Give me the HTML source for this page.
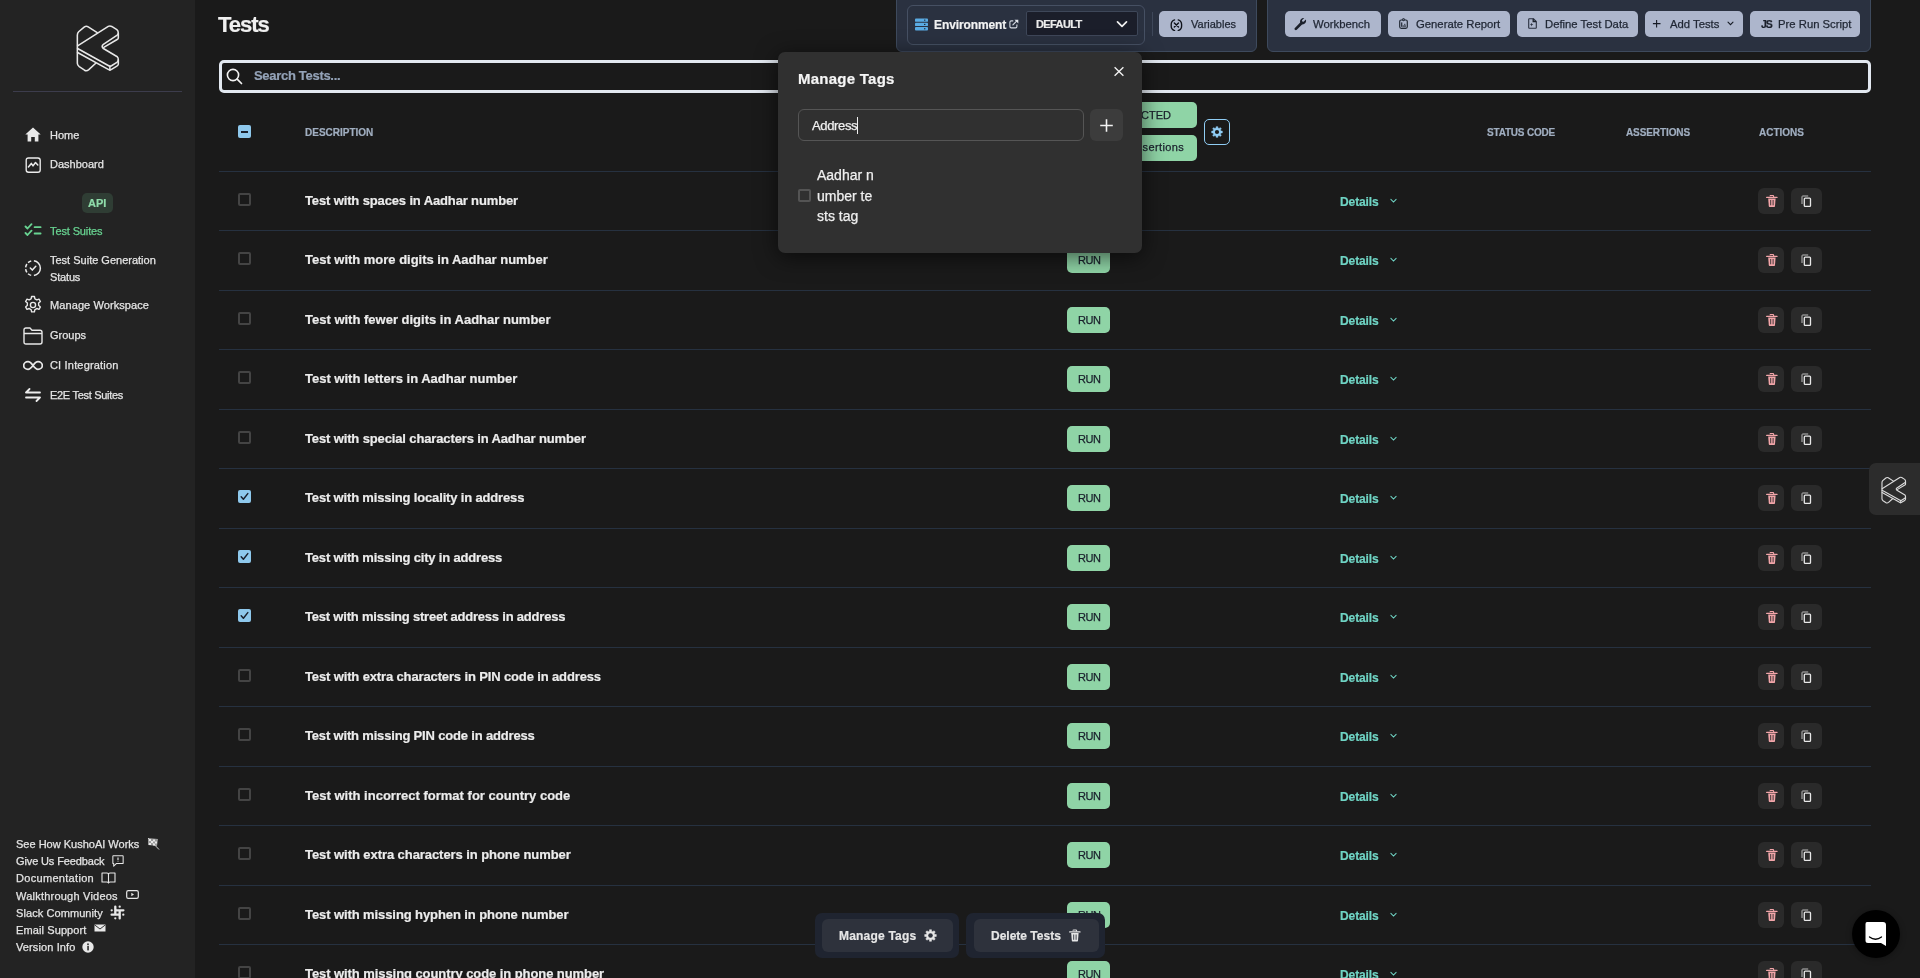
<!DOCTYPE html>
<html><head><meta charset="utf-8"><title>Tests</title>
<style>
html,body{margin:0;padding:0;width:1920px;height:978px;overflow:hidden;background:#1a1a1a;font-family:"Liberation Sans",sans-serif;}
.a{position:absolute;box-sizing:border-box;}
.t{position:absolute;white-space:nowrap;-webkit-font-smoothing:antialiased;will-change:transform;}
.w4{-webkit-text-stroke:0.25px currentColor;}
.w7{-webkit-text-stroke:0.2px currentColor;}
</style></head><body>
<div class="a" style="left:0px;top:0px;width:195px;height:978px;background:#232323;"></div>
<svg class="a" style="left:60px;top:15px;" width="80" height="80" viewBox="0 0 978 978" fill="none"><g stroke="#e8e8e8" stroke-width="19" stroke-linejoin="round" stroke-linecap="round"><path d="M455,215 L345,145 Q320,130 295,148 L228,205 Q212,222 212,248 L212,590 Q212,615 235,632 L300,675 Q325,690 352,668 L437,590"/>
<path d="M215,378 L590,140 Q610,128 632,140 L695,178 Q713,192 713,222 Q712,238 695,250 L530,360 Q500,384 530,410 L700,510 Q713,522 713,548 Q712,568 695,580 L630,620 Q612,630 595,620 L215,410"/>
<path d="M713,222 L713,281 Q713,292 698,300 L535,396"/>
<path d="M713,548 L713,602 Q712,615 695,625 L630,665 Q612,676 595,668 L215,458"/>
<path d="M610,627 L610,675"/></g></svg>
<div class="a" style="left:13px;top:91px;width:169px;height:1px;background:#3c3c4c;"></div>
<svg class="a" style="left:25px;top:127px;" width="16" height="15" viewBox="0 0 16 15" fill="none"><path d="M8 0.5 L0.3 7.6 H2.6 V14.5 H6.2 V10 H9.8 V14.5 H13.4 V7.6 H15.7 Z" fill="#e8e8e8"/></svg>
<div class="t w4" style="left:49.5px;top:128.69px;font-size:11px;line-height:13px;color:#e4e4e4;font-weight:400;">Home</div>
<svg class="a" style="left:25px;top:157px;" width="16" height="16" viewBox="0 0 16 16" fill="none"><rect x="1.2" y="0.95" width="14" height="14.3" rx="2.3" stroke="#ececec" stroke-width="1.35"/><path d="M3.4 9.9 L6.3 6.4 L8 8.9 L10.5 5.5 L12.8 8" stroke="#ececec" stroke-width="1.5" stroke-linejoin="round" stroke-linecap="round"/></svg>
<div class="t w4" style="left:49.5px;top:158.44px;font-size:11px;line-height:13px;color:#e4e4e4;font-weight:400;">Dashboard</div>
<div class="a" style="left:82px;top:193px;width:31px;height:20px;background:#2f3d34;border-radius:5px;"></div>
<div class="t w7" style="left:88px;top:196.69px;font-size:11px;line-height:13px;color:#8fdcaa;font-weight:700;">API</div>
<svg class="a" style="left:24px;top:223px;" width="19" height="15" viewBox="0 0 19 15" fill="none"><path d="M1.5 3.5 L3.5 5.5 L7.5 1.2 M1.5 10 L3.5 12 L7.5 7.7" stroke="#68d391" stroke-width="1.8" stroke-linecap="round" stroke-linejoin="round"/><path d="M10.6 4.2 H16.6 M10.6 10.5 H16.6" stroke="#68d391" stroke-width="1.8" stroke-linecap="round"/></svg>
<div class="t w4" style="left:49.5px;top:224.69px;font-size:11px;line-height:13px;color:#68d391;font-weight:400;letter-spacing:-0.12px;">Test Suites</div>
<svg class="a" style="left:24px;top:259px;" width="18" height="18" viewBox="0 0 18 18" fill="none"><path d="M9.90 1.86 A7.4 7.4 0 0 1 9.90 16.54 M7.21 16.38 A7.4 7.4 0 0 1 4.10 14.74 M2.90 13.39 A7.4 7.4 0 0 1 1.66 10.10 M1.66 8.30 A7.4 7.4 0 0 1 2.90 5.01 M4.10 3.66 A7.4 7.4 0 0 1 7.21 2.02" stroke="#ececec" stroke-width="1.5" stroke-linecap="butt"/><path d="M6.3 9 L8.3 11.1 L11.8 7.2" stroke="#ececec" stroke-width="1.5" stroke-linecap="round" stroke-linejoin="round"/></svg>
<div class="t w4" style="left:49.5px;top:253.59px;font-size:11px;line-height:13px;color:#e4e4e4;font-weight:400;">Test Suite Generation</div>
<div class="t w4" style="left:49.5px;top:270.59px;font-size:11px;line-height:13px;color:#e4e4e4;font-weight:400;letter-spacing:-0.17px;">Status</div>
<svg class="a" style="left:23px;top:295px;" width="20" height="20" viewBox="0 0 20 20" fill="none"><path d="M8.6 1.5 h2.8 l0.5 2.3 a6.5 6.5 0 0 1 1.9 1.1 l2.2 -0.8 l1.4 2.4 l-1.8 1.6 a6.5 6.5 0 0 1 0 2.2 l1.8 1.6 l-1.4 2.4 l-2.2 -0.8 a6.5 6.5 0 0 1 -1.9 1.1 l-0.5 2.3 h-2.8 l-0.5 -2.3 a6.5 6.5 0 0 1 -1.9 -1.1 l-2.2 0.8 l-1.4 -2.4 l1.8 -1.6 a6.5 6.5 0 0 1 0 -2.2 l-1.8 -1.6 l1.4 -2.4 l2.2 0.8 a6.5 6.5 0 0 1 1.9 -1.1 Z" stroke="#e8e8e8" stroke-width="1.4" stroke-linejoin="round"/><circle cx="10" cy="10" r="2.6" stroke="#e8e8e8" stroke-width="1.4"/></svg>
<div class="t w4" style="left:49.5px;top:298.69px;font-size:11px;line-height:13px;color:#e4e4e4;font-weight:400;letter-spacing:0.09px;">Manage Workspace</div>
<svg class="a" style="left:23px;top:327px;" width="20" height="18" viewBox="0 0 20 18" fill="none"><path d="M1 3 Q1 1 3 1 H7 L9 3.2 H17 Q19 3.2 19 5.2 V15 Q19 17 17 17 H3 Q1 17 1 15 Z M1 6.5 H19" stroke="#e8e8e8" stroke-width="1.4" stroke-linejoin="round"/></svg>
<div class="t w4" style="left:49.5px;top:329.09px;font-size:11px;line-height:13px;color:#e4e4e4;font-weight:400;">Groups</div>
<svg class="a" style="left:23px;top:359px;" width="20" height="13" viewBox="0 0 20 13" fill="none"><path d="M10 6.5 C11.8 4 13.3 2.7 15 2.7 A4.3 3.8 0 0 1 15 10.3 C13.3 10.3 11.8 9 10 6.5 C8.2 4 6.7 2.7 5 2.7 A4.3 3.8 0 0 0 5 10.3 C6.7 10.3 8.2 9 10 6.5 Z" stroke="#e8e8e8" stroke-width="1.7" stroke-linejoin="round"/></svg>
<div class="t w4" style="left:49.5px;top:358.89px;font-size:11px;line-height:13px;color:#e4e4e4;font-weight:400;letter-spacing:0.18px;">CI Integration</div>
<svg class="a" style="left:24px;top:388px;" width="18" height="14" viewBox="0 0 18 14" fill="none"><path d="M2 4.5 H16 M2 4.5 L5.5 1 M16 9.5 H2 M16 9.5 L12.5 13" stroke="#ececec" stroke-width="1.8" stroke-linecap="round" stroke-linejoin="round"/></svg>
<div class="t w4" style="left:49.5px;top:388.89px;font-size:11px;line-height:13px;color:#e4e4e4;font-weight:400;letter-spacing:-0.3px;">E2E Test Suites</div>
<div class="t w4" style="left:16px;top:837.99px;font-size:11px;line-height:13px;color:#e4e4e4;font-weight:400;letter-spacing:0px;">See How KushoAI Works</div>
<div class="t w4" style="left:16px;top:854.59px;font-size:11px;line-height:13px;color:#e4e4e4;font-weight:400;letter-spacing:-0.125px;">Give Us Feedback</div>
<div class="t w4" style="left:16px;top:871.89px;font-size:11px;line-height:13px;color:#e4e4e4;font-weight:400;letter-spacing:0.31px;">Documentation</div>
<div class="t w4" style="left:16px;top:889.69px;font-size:11px;line-height:13px;color:#e4e4e4;font-weight:400;letter-spacing:0.22px;">Walkthrough Videos</div>
<div class="t w4" style="left:16px;top:906.59px;font-size:11px;line-height:13px;color:#e4e4e4;font-weight:400;letter-spacing:0.08px;">Slack Community</div>
<div class="t w4" style="left:16px;top:923.59px;font-size:11px;line-height:13px;color:#e4e4e4;font-weight:400;letter-spacing:0.11px;">Email Support</div>
<div class="t w4" style="left:16px;top:940.59px;font-size:11px;line-height:13px;color:#e4e4e4;font-weight:400;letter-spacing:0.11px;">Version Info</div>
<svg class="a" style="left:147px;top:837px;" width="13" height="14" viewBox="0 0 13 14" fill="none"><path d="M1 1 L11 2 L10 9 L1 8 Z" fill="#9a9a9a"/><path d="M1 1 L12 12.5" stroke="#cfcfcf" stroke-width="1"/><path d="M2 2 h2 v2 h-2z M6 2.5 h2 v2 h-2z M4 4 h2 v2 h-2z M8 4.5 h2 v2 h-2z M2 6 h2 v2 h-2z M6 6.5 h2 v2 h-2z" fill="#e8e8e8"/></svg>
<svg class="a" style="left:112px;top:854.5px;" width="12" height="12.0" viewBox="0 0 14 14" fill="none"><path d="M1.5 1 H12.5 Q13 1 13 1.5 V9.5 Q13 10 12.5 10 H5 L2 13 V10 H1.5 Q1 10 1 9.5 V1.5 Q1 1 1.5 1 Z" stroke="#e8e8e8" stroke-width="1.2" stroke-linejoin="round"/><path d="M7 3 V6.2 M7 7.5 V8.3" stroke="#e8e8e8" stroke-width="1.3"/></svg>
<svg class="a" style="left:101px;top:872px;" width="15" height="12" viewBox="0 0 15 12" fill="none"><path d="M1 1 H6 Q7.5 1 7.5 2.5 V11 Q7.5 10 6 10 H1 Z M14 1 H9 Q7.5 1 7.5 2.5 V11 Q7.5 10 9 10 H14 Z" stroke="#e8e8e8" stroke-width="1.1" stroke-linejoin="round"/></svg>
<svg class="a" style="left:126px;top:890px;" width="13" height="9" viewBox="0 0 13 9" fill="none"><rect x="0.7" y="0.7" width="11.6" height="7.6" rx="1.6" stroke="#e8e8e8" stroke-width="1.2"/><path d="M5.3 2.8 L8 4.5 L5.3 6.2 Z" fill="#e8e8e8"/></svg>
<svg class="a" style="left:110px;top:905px;" width="15" height="15" viewBox="0 0 15 15" fill="none"><g stroke="#e8e8e8" stroke-width="2.3" stroke-linecap="round"><path d="M5.3 1.6 V8.2 M6.8 5.3 H13.4 M9.7 6.8 V13.4 M8.2 9.7 H1.6"/></g><g fill="#e8e8e8"><circle cx="1.7" cy="5.3" r="1.15"/><circle cx="9.7" cy="1.7" r="1.15"/><circle cx="13.3" cy="9.7" r="1.15"/><circle cx="5.3" cy="13.3" r="1.15"/></g></svg>
<svg class="a" style="left:94px;top:924px;" width="12" height="8" viewBox="0 0 12 8" fill="none"><rect x="0.5" y="0.5" width="11" height="7" fill="#e8e8e8"/><path d="M0.5 0.8 L6 5 L11.5 0.8" stroke="#222" stroke-width="0.9" fill="none"/></svg>
<svg class="a" style="left:82px;top:940.5px;" width="12" height="12.0" viewBox="0 0 12 12" fill="none"><circle cx="6" cy="6" r="5.7" fill="#e8e8e8"/><rect x="5.3" y="4.8" width="1.5" height="4.6" fill="#222"/><circle cx="6" cy="3.2" r="0.85" fill="#222"/></svg>
<div class="t w7" style="left:218.3px;top:12.27px;font-size:22px;line-height:26px;color:#f0f0f0;font-weight:700;letter-spacing:-1.05px;">Tests</div>
<div class="a" style="left:896px;top:-10px;width:361px;height:61.5px;background:#2a3140;border:1px solid #3e4a5d;border-radius:6px;"></div>
<div class="a" style="left:907px;top:4.5px;width:238px;height:40.5px;border:1px solid #465063;border-radius:6px;"></div>
<svg class="a" style="left:915px;top:18px;" width="13" height="13" viewBox="0 0 13 13" fill="none"><g fill="#5aabe3"><rect x="0" y="0.5" width="13" height="3.3" rx="0.9"/><rect x="0" y="4.8" width="13" height="3.3" rx="0.9"/><rect x="0" y="9.1" width="13" height="3.3" rx="0.9"/></g><g fill="#1f2a3a"><rect x="9" y="1.6" width="1.4" height="1.1"/><rect x="9" y="5.9" width="1.4" height="1.1"/><rect x="9" y="10.2" width="1.4" height="1.1"/></g></svg>
<div class="t w7" style="left:933.5px;top:17.84px;font-size:12px;line-height:14px;color:#f2f2f2;font-weight:700;letter-spacing:-0.1px;">Environment</div>
<svg class="a" style="left:1009px;top:19px;" width="10" height="10" viewBox="0 0 10 10" fill="none"><path d="M4.3 1.9 H2.2 Q0.9 1.9 0.9 3.2 V7.6 Q0.9 8.9 2.2 8.9 H6.6 Q7.9 8.9 7.9 7.6 V5.6" stroke="#d4d9e2" stroke-width="1.1"/><path d="M3.9 5.9 L7.6 2.2" stroke="#d4d9e2" stroke-width="1.2" stroke-linecap="round"/><path d="M5.5 0.7 H9.3 V4.5 Z" fill="#e4e8ee"/></svg>
<div class="a" style="left:1025.5px;top:11.3px;width:112.5px;height:25.2px;background:#1b1e2a;border:1px solid #3e4759;border-radius:2px;"></div>
<div class="t w7" style="left:1036px;top:17.69px;font-size:11px;line-height:13px;color:#ececec;font-weight:700;letter-spacing:-0.6px;">DEFAULT</div>
<svg class="a" style="left:1116px;top:20px;" width="12" height="8" viewBox="0 0 12 8" fill="none"><path d="M1.5 1.8 L6 6.3 L10.5 1.8" stroke="#f0f0f0" stroke-width="1.7" stroke-linecap="round" stroke-linejoin="round"/></svg>
<div class="a" style="left:1152px;top:12.4px;width:1px;height:23.300000000000004px;background:#3e4759;"></div>
<div class="a" style="left:1159px;top:11px;width:88px;height:26px;background:#adb6cc;border-radius:5px;"></div>
<svg class="a" style="left:1170px;top:18.5px;" width="13" height="12.5" viewBox="0 0 13 12.5" fill="none"><path d="M4.6 0.9 Q1.2 2 1.2 5.5 V7 Q1.2 10.5 4.6 11.6 M8.2 0.9 Q11.6 2 11.6 5.5 V7 Q11.6 10.5 8.2 11.6" stroke="#0f131b" stroke-width="1.35" stroke-linecap="round"/><path d="M4.3 3.9 L8.5 8.1 M8.5 3.9 L4.3 8.1" stroke="#0f131b" stroke-width="1.35" stroke-linecap="round"/></svg>
<div class="t w4" style="left:1191px;top:18.09px;font-size:11px;line-height:13px;color:#1f2633;font-weight:400;">Variables</div>
<div class="a" style="left:1267.4px;top:-10px;width:603.5999999999999px;height:61.5px;background:#2a3140;border:1px solid #3e4a5d;border-radius:6px;"></div>
<div class="a" style="left:1285px;top:11px;width:96px;height:25.799999999999997px;background:#adb6cc;border-radius:5px;"></div>
<div class="t w4" style="left:1312.7px;top:16.78px;font-size:11.3px;line-height:14px;color:#1f2633;font-weight:400;">Workbench</div>
<div class="a" style="left:1387.8px;top:11px;width:122.0px;height:25.799999999999997px;background:#adb6cc;border-radius:5px;"></div>
<div class="t w4" style="left:1415.6px;top:16.78px;font-size:11.3px;line-height:14px;color:#1f2633;font-weight:400;">Generate Report</div>
<div class="a" style="left:1517.2px;top:11px;width:120.70000000000005px;height:25.799999999999997px;background:#adb6cc;border-radius:5px;"></div>
<div class="t w4" style="left:1544.5px;top:16.78px;font-size:11.3px;line-height:14px;color:#1f2633;font-weight:400;">Define Test Data</div>
<div class="a" style="left:1645.2px;top:11px;width:97.59999999999991px;height:25.799999999999997px;background:#adb6cc;border-radius:5px;"></div>
<div class="t w4" style="left:1669.9px;top:16.78px;font-size:11.3px;line-height:14px;color:#1f2633;font-weight:400;">Add Tests</div>
<div class="a" style="left:1750px;top:11px;width:110px;height:25.799999999999997px;background:#adb6cc;border-radius:5px;"></div>
<div class="t w4" style="left:1777.9px;top:16.78px;font-size:11.3px;line-height:14px;color:#1f2633;font-weight:400;">Pre Run Script</div>
<svg class="a" style="left:1293.8px;top:17px;" width="13.0" height="14" viewBox="0 0 13 14" fill="none"><path d="M11.8 2.6 L9.6 4.8 L8.2 4.6 L8 3.2 L10.2 1 A3.6 3.6 0 0 0 6.2 5.6 L0.9 10.9 A1.3 1.3 0 0 0 2.8 12.8 L8.1 7.5 A3.6 3.6 0 0 0 11.8 2.6 Z" fill="#1b202b"/></svg>
<svg class="a" style="left:1398.5px;top:18.2px;" width="9.0" height="11.0" viewBox="0 0 9 11" fill="none"><rect x="0.7" y="2" width="7.6" height="8.3" rx="1.5" stroke="#232a36" stroke-width="1.2"/><circle cx="4.5" cy="1.6" r="1.1" stroke="#232a36" stroke-width="1"/><rect x="2.1" y="4.4" width="1.2" height="4.4" fill="#232a36"/><rect x="3.3" y="7.2" width="3.7" height="2.2" fill="#5a6272"/><rect x="5.3" y="5.8" width="1" height="1.4" fill="#232a36"/></svg>
<svg class="a" style="left:1527.5px;top:18.3px;" width="9.0" height="11.0" viewBox="0 0 9 11" fill="none"><path d="M1.3 0.7 H5.4 L8.3 3.6 V9.7 Q8.3 10.3 7.7 10.3 H1.3 Q0.7 10.3 0.7 9.7 V1.3 Q0.7 0.7 1.3 0.7 Z" stroke="#2a3140" stroke-width="1.1" stroke-linejoin="round"/><path d="M5.2 0.8 V3.5 H8.2" stroke="#1b202b" stroke-width="1.3"/><path d="M3.6 4.8 L4.1 6.1 L5.4 6.6 L4.1 7.1 L3.6 8.4 L3.1 7.1 L1.8 6.6 L3.1 6.1 Z" fill="#2a3140"/></svg>
<svg class="a" style="left:1652px;top:19px;" width="9" height="9" viewBox="0 0 9 9" fill="none"><path d="M4.6 0.9 V8.5 M0.9 4.6 H8.5" stroke="#161b25" stroke-width="1.1"/></svg>
<svg class="a" style="left:1727px;top:21px;" width="7" height="5" viewBox="0 0 7 5" fill="none"><path d="M1 1.1 L3.5 3.7 L6 1.1" stroke="#161b25" stroke-width="1.1" stroke-linecap="round"/></svg>
<div class="t w7" style="left:1760.8px;top:17.56px;font-size:10.5px;line-height:13px;color:#1b202b;font-weight:700;letter-spacing:-1.0px;">JS</div>
<div class="a" style="left:219px;top:60px;width:1652px;height:33px;border:3px solid #e2e8f0;border-radius:5px;background:#1a1a1a;"></div>
<svg class="a" style="left:226px;top:68px;" width="17" height="17" viewBox="0 0 17 17" fill="none"><circle cx="7" cy="7" r="5.6" stroke="#f2f2f2" stroke-width="1.6"/><path d="M11.2 11.2 L15.5 15.5" stroke="#f2f2f2" stroke-width="1.7" stroke-linecap="round"/></svg>
<div class="t w7" style="left:254.3px;top:68.29px;font-size:13px;line-height:16px;color:#94a3b8;font-weight:700;letter-spacing:-0.3px;">Search Tests...</div>
<div class="a" style="left:238px;top:125px;width:13px;height:13px;background:#8ec8ec;border-radius:2px;"></div>
<div class="a" style="left:241px;top:130.5px;width:7px;height:2.0px;background:#1a202c;"></div>
<div class="t w7" style="left:305px;top:126.93px;font-size:10px;line-height:12px;color:#a0aec0;font-weight:700;">DESCRIPTION</div>
<div class="t w7" style="left:1487px;top:126.93px;font-size:10px;line-height:12px;color:#a0aec0;font-weight:700;letter-spacing:-0.2px;">STATUS CODE</div>
<div class="t w7" style="left:1626.4px;top:126.93px;font-size:10px;line-height:12px;color:#a0aec0;font-weight:700;letter-spacing:-0.1px;">ASSERTIONS</div>
<div class="t w7" style="left:1758.5px;top:126.93px;font-size:10px;line-height:12px;color:#a0aec0;font-weight:700;">ACTIONS</div>
<div class="a" style="left:1040px;top:102px;width:157px;height:26px;background:#8fd4a6;border-radius:5px;"></div>
<div class="a" style="left:1040px;top:135px;width:157px;height:26px;background:#8fd4a6;border-radius:5px;"></div>
<div class="t w4" style="left:1086px;top:108.69px;font-size:11px;line-height:13px;color:#1a202c;font-weight:400;">RUN SELECTED</div>
<div class="t w4" style="left:1079.8px;top:141.19px;font-size:11px;line-height:13px;color:#1a202c;font-weight:400;letter-spacing:0.4px;">Run with Assertions</div>
<div class="a" style="left:1204px;top:119px;width:26px;height:26px;border:1.5px solid #90cdf4;border-radius:5px;"></div>
<svg class="a" style="left:1211px;top:126px;" width="12" height="12" viewBox="0 0 12 12" fill="none"><path d="M5.01 1.71 L5.02 0.18 L6.98 0.18 L6.99 1.71 L8.34 2.27 L9.42 1.19 L10.81 2.58 L9.73 3.66 L10.29 5.01 L11.82 5.02 L11.82 6.98 L10.29 6.99 L9.73 8.34 L10.81 9.42 L9.42 10.81 L8.34 9.73 L6.99 10.29 L6.98 11.82 L5.02 11.82 L5.01 10.29 L3.66 9.73 L2.58 10.81 L1.19 9.42 L2.27 8.34 L1.71 6.99 L0.18 6.98 L0.18 5.02 L1.71 5.01 L2.27 3.66 L1.19 2.58 L2.58 1.19 L3.66 2.27 Z" fill="#90cdf4" stroke="#90cdf4" stroke-width="0.5" stroke-linejoin="round" transform="translate(6 6) scale(0.92) translate(-6 -6)"/><circle cx="6" cy="6" r="2.1" fill="#1a1a1a"/></svg>
<div class="a" style="left:219px;top:171px;width:1652px;height:1px;background:#263140;"></div>
<div class="a" style="left:238px;top:193px;width:13px;height:13px;border:2px solid #444444;border-radius:2px;"></div>
<div class="t w7" style="left:305px;top:193.24px;font-size:13px;line-height:16px;color:#ececec;font-weight:700;letter-spacing:-0.135px;">Test with spaces in Aadhar number</div>
<div class="a" style="left:1067px;top:188px;width:43px;height:26px;background:#8fd4a6;border-radius:5px;"></div>
<div class="t w4" style="left:1077.8px;top:194.64px;font-size:11px;line-height:13px;color:#1a202c;font-weight:400;letter-spacing:-0.4px;">RUN</div>
<div class="t w7" style="left:1340.4px;top:194.84px;font-size:12px;line-height:14px;color:#6fd4c4;font-weight:700;letter-spacing:-0.1px;">Details</div>
<svg class="a" style="left:1389px;top:197.25px;" width="9" height="7.0" viewBox="0 0 9 7" fill="none"><path d="M1.9 2.4 L4.5 5 L7.1 2.4" stroke="#6fd4c4" stroke-width="1.05" stroke-linecap="round"/></svg>
<div class="a" style="left:1758px;top:188px;width:26px;height:26px;background:#2a2a2a;border-radius:6px;"></div>
<svg class="a" style="left:1765.6px;top:194.75px;" width="12.0" height="12.5" viewBox="0 0 12 12.5" fill="none"><path d="M4 1.2 Q4 0.5 4.7 0.5 H6.9 Q7.6 0.5 7.6 1.2 V2" stroke="#f2a5a9" stroke-width="1.1"/><path d="M0.7 2.4 H11" stroke="#f2a5a9" stroke-width="1.3" stroke-linecap="round"/><path d="M2.2 3.6 H9.6 L9 11.3 Q8.9 11.9 8.3 11.9 H3.5 Q2.9 11.9 2.8 11.3 Z" fill="#f2a5a9"/><path d="M4.7 5 V10.3 M7.1 5 V10.3" stroke="#2a2a2a" stroke-width="0.9"/></svg>
<div class="a" style="left:1791px;top:188px;width:31px;height:26px;background:#2a2a2a;border-radius:6px;"></div>
<svg class="a" style="left:1801px;top:194.55px;" width="11" height="12.5" viewBox="0 0 11 12.5" fill="none"><path d="M1 9 V1.7 Q1 1 1.7 1 H7.2" stroke="#bdbdbd" stroke-width="1"/><rect x="3.3" y="3.1" width="6.2" height="8.3" rx="0.9" stroke="#e8e8e8" stroke-width="1.3"/></svg>
<div class="a" style="left:219px;top:230px;width:1652px;height:1px;background:#263140;"></div>
<div class="a" style="left:238px;top:252px;width:13px;height:13px;border:2px solid #444444;border-radius:2px;"></div>
<div class="t w7" style="left:305px;top:252.24px;font-size:13px;line-height:16px;color:#ececec;font-weight:700;letter-spacing:-0.016px;">Test with more digits in Aadhar number</div>
<div class="a" style="left:1067px;top:247px;width:43px;height:26px;background:#8fd4a6;border-radius:5px;"></div>
<div class="t w4" style="left:1077.8px;top:253.64px;font-size:11px;line-height:13px;color:#1a202c;font-weight:400;letter-spacing:-0.4px;">RUN</div>
<div class="t w7" style="left:1340.4px;top:253.84px;font-size:12px;line-height:14px;color:#6fd4c4;font-weight:700;letter-spacing:-0.1px;">Details</div>
<svg class="a" style="left:1389px;top:256.25px;" width="9" height="7.0" viewBox="0 0 9 7" fill="none"><path d="M1.9 2.4 L4.5 5 L7.1 2.4" stroke="#6fd4c4" stroke-width="1.05" stroke-linecap="round"/></svg>
<div class="a" style="left:1758px;top:247px;width:26px;height:26px;background:#2a2a2a;border-radius:6px;"></div>
<svg class="a" style="left:1765.6px;top:253.75px;" width="12.0" height="12.5" viewBox="0 0 12 12.5" fill="none"><path d="M4 1.2 Q4 0.5 4.7 0.5 H6.9 Q7.6 0.5 7.6 1.2 V2" stroke="#f2a5a9" stroke-width="1.1"/><path d="M0.7 2.4 H11" stroke="#f2a5a9" stroke-width="1.3" stroke-linecap="round"/><path d="M2.2 3.6 H9.6 L9 11.3 Q8.9 11.9 8.3 11.9 H3.5 Q2.9 11.9 2.8 11.3 Z" fill="#f2a5a9"/><path d="M4.7 5 V10.3 M7.1 5 V10.3" stroke="#2a2a2a" stroke-width="0.9"/></svg>
<div class="a" style="left:1791px;top:247px;width:31px;height:26px;background:#2a2a2a;border-radius:6px;"></div>
<svg class="a" style="left:1801px;top:253.55px;" width="11" height="12.5" viewBox="0 0 11 12.5" fill="none"><path d="M1 9 V1.7 Q1 1 1.7 1 H7.2" stroke="#bdbdbd" stroke-width="1"/><rect x="3.3" y="3.1" width="6.2" height="8.3" rx="0.9" stroke="#e8e8e8" stroke-width="1.3"/></svg>
<div class="a" style="left:219px;top:290px;width:1652px;height:1px;background:#263140;"></div>
<div class="a" style="left:238px;top:312px;width:13px;height:13px;border:2px solid #444444;border-radius:2px;"></div>
<div class="t w7" style="left:305px;top:312.24px;font-size:13px;line-height:16px;color:#ececec;font-weight:700;letter-spacing:0.001px;">Test with fewer digits in Aadhar number</div>
<div class="a" style="left:1067px;top:307px;width:43px;height:26px;background:#8fd4a6;border-radius:5px;"></div>
<div class="t w4" style="left:1077.8px;top:313.64px;font-size:11px;line-height:13px;color:#1a202c;font-weight:400;letter-spacing:-0.4px;">RUN</div>
<div class="t w7" style="left:1340.4px;top:313.84px;font-size:12px;line-height:14px;color:#6fd4c4;font-weight:700;letter-spacing:-0.1px;">Details</div>
<svg class="a" style="left:1389px;top:316.25px;" width="9" height="7.0" viewBox="0 0 9 7" fill="none"><path d="M1.9 2.4 L4.5 5 L7.1 2.4" stroke="#6fd4c4" stroke-width="1.05" stroke-linecap="round"/></svg>
<div class="a" style="left:1758px;top:307px;width:26px;height:26px;background:#2a2a2a;border-radius:6px;"></div>
<svg class="a" style="left:1765.6px;top:313.75px;" width="12.0" height="12.5" viewBox="0 0 12 12.5" fill="none"><path d="M4 1.2 Q4 0.5 4.7 0.5 H6.9 Q7.6 0.5 7.6 1.2 V2" stroke="#f2a5a9" stroke-width="1.1"/><path d="M0.7 2.4 H11" stroke="#f2a5a9" stroke-width="1.3" stroke-linecap="round"/><path d="M2.2 3.6 H9.6 L9 11.3 Q8.9 11.9 8.3 11.9 H3.5 Q2.9 11.9 2.8 11.3 Z" fill="#f2a5a9"/><path d="M4.7 5 V10.3 M7.1 5 V10.3" stroke="#2a2a2a" stroke-width="0.9"/></svg>
<div class="a" style="left:1791px;top:307px;width:31px;height:26px;background:#2a2a2a;border-radius:6px;"></div>
<svg class="a" style="left:1801px;top:313.55px;" width="11" height="12.5" viewBox="0 0 11 12.5" fill="none"><path d="M1 9 V1.7 Q1 1 1.7 1 H7.2" stroke="#bdbdbd" stroke-width="1"/><rect x="3.3" y="3.1" width="6.2" height="8.3" rx="0.9" stroke="#e8e8e8" stroke-width="1.3"/></svg>
<div class="a" style="left:219px;top:349px;width:1652px;height:1px;background:#263140;"></div>
<div class="a" style="left:238px;top:371px;width:13px;height:13px;border:2px solid #444444;border-radius:2px;"></div>
<div class="t w7" style="left:305px;top:371.24px;font-size:13px;line-height:16px;color:#ececec;font-weight:700;letter-spacing:-0.003px;">Test with letters in Aadhar number</div>
<div class="a" style="left:1067px;top:366px;width:43px;height:26px;background:#8fd4a6;border-radius:5px;"></div>
<div class="t w4" style="left:1077.8px;top:372.64px;font-size:11px;line-height:13px;color:#1a202c;font-weight:400;letter-spacing:-0.4px;">RUN</div>
<div class="t w7" style="left:1340.4px;top:372.84px;font-size:12px;line-height:14px;color:#6fd4c4;font-weight:700;letter-spacing:-0.1px;">Details</div>
<svg class="a" style="left:1389px;top:375.25px;" width="9" height="7.0" viewBox="0 0 9 7" fill="none"><path d="M1.9 2.4 L4.5 5 L7.1 2.4" stroke="#6fd4c4" stroke-width="1.05" stroke-linecap="round"/></svg>
<div class="a" style="left:1758px;top:366px;width:26px;height:26px;background:#2a2a2a;border-radius:6px;"></div>
<svg class="a" style="left:1765.6px;top:372.75px;" width="12.0" height="12.5" viewBox="0 0 12 12.5" fill="none"><path d="M4 1.2 Q4 0.5 4.7 0.5 H6.9 Q7.6 0.5 7.6 1.2 V2" stroke="#f2a5a9" stroke-width="1.1"/><path d="M0.7 2.4 H11" stroke="#f2a5a9" stroke-width="1.3" stroke-linecap="round"/><path d="M2.2 3.6 H9.6 L9 11.3 Q8.9 11.9 8.3 11.9 H3.5 Q2.9 11.9 2.8 11.3 Z" fill="#f2a5a9"/><path d="M4.7 5 V10.3 M7.1 5 V10.3" stroke="#2a2a2a" stroke-width="0.9"/></svg>
<div class="a" style="left:1791px;top:366px;width:31px;height:26px;background:#2a2a2a;border-radius:6px;"></div>
<svg class="a" style="left:1801px;top:372.55px;" width="11" height="12.5" viewBox="0 0 11 12.5" fill="none"><path d="M1 9 V1.7 Q1 1 1.7 1 H7.2" stroke="#bdbdbd" stroke-width="1"/><rect x="3.3" y="3.1" width="6.2" height="8.3" rx="0.9" stroke="#e8e8e8" stroke-width="1.3"/></svg>
<div class="a" style="left:219px;top:409px;width:1652px;height:1px;background:#263140;"></div>
<div class="a" style="left:238px;top:431px;width:13px;height:13px;border:2px solid #444444;border-radius:2px;"></div>
<div class="t w7" style="left:305px;top:431.24px;font-size:13px;line-height:16px;color:#ececec;font-weight:700;letter-spacing:-0.132px;">Test with special characters in Aadhar number</div>
<div class="a" style="left:1067px;top:426px;width:43px;height:26px;background:#8fd4a6;border-radius:5px;"></div>
<div class="t w4" style="left:1077.8px;top:432.64px;font-size:11px;line-height:13px;color:#1a202c;font-weight:400;letter-spacing:-0.4px;">RUN</div>
<div class="t w7" style="left:1340.4px;top:432.84px;font-size:12px;line-height:14px;color:#6fd4c4;font-weight:700;letter-spacing:-0.1px;">Details</div>
<svg class="a" style="left:1389px;top:435.25px;" width="9" height="7.0" viewBox="0 0 9 7" fill="none"><path d="M1.9 2.4 L4.5 5 L7.1 2.4" stroke="#6fd4c4" stroke-width="1.05" stroke-linecap="round"/></svg>
<div class="a" style="left:1758px;top:426px;width:26px;height:26px;background:#2a2a2a;border-radius:6px;"></div>
<svg class="a" style="left:1765.6px;top:432.75px;" width="12.0" height="12.5" viewBox="0 0 12 12.5" fill="none"><path d="M4 1.2 Q4 0.5 4.7 0.5 H6.9 Q7.6 0.5 7.6 1.2 V2" stroke="#f2a5a9" stroke-width="1.1"/><path d="M0.7 2.4 H11" stroke="#f2a5a9" stroke-width="1.3" stroke-linecap="round"/><path d="M2.2 3.6 H9.6 L9 11.3 Q8.9 11.9 8.3 11.9 H3.5 Q2.9 11.9 2.8 11.3 Z" fill="#f2a5a9"/><path d="M4.7 5 V10.3 M7.1 5 V10.3" stroke="#2a2a2a" stroke-width="0.9"/></svg>
<div class="a" style="left:1791px;top:426px;width:31px;height:26px;background:#2a2a2a;border-radius:6px;"></div>
<svg class="a" style="left:1801px;top:432.55px;" width="11" height="12.5" viewBox="0 0 11 12.5" fill="none"><path d="M1 9 V1.7 Q1 1 1.7 1 H7.2" stroke="#bdbdbd" stroke-width="1"/><rect x="3.3" y="3.1" width="6.2" height="8.3" rx="0.9" stroke="#e8e8e8" stroke-width="1.3"/></svg>
<div class="a" style="left:219px;top:468px;width:1652px;height:1px;background:#263140;"></div>
<div class="a" style="left:238px;top:490px;width:13px;height:13px;background:#8ec8ec;border-radius:2px;"></div>
<svg class="a" style="left:238px;top:490px;" width="13" height="13" viewBox="0 0 13 13" fill="none"><path d="M3.2 6.8 L5.4 9.2 L9.8 3.6" stroke="#1a202c" stroke-width="1.5" stroke-linecap="round" stroke-linejoin="round"/></svg>
<div class="t w7" style="left:305px;top:490.24px;font-size:13px;line-height:16px;color:#ececec;font-weight:700;letter-spacing:-0.161px;">Test with missing locality in address</div>
<div class="a" style="left:1067px;top:485px;width:43px;height:26px;background:#8fd4a6;border-radius:5px;"></div>
<div class="t w4" style="left:1077.8px;top:491.64px;font-size:11px;line-height:13px;color:#1a202c;font-weight:400;letter-spacing:-0.4px;">RUN</div>
<div class="t w7" style="left:1340.4px;top:491.84px;font-size:12px;line-height:14px;color:#6fd4c4;font-weight:700;letter-spacing:-0.1px;">Details</div>
<svg class="a" style="left:1389px;top:494.25px;" width="9" height="7.0" viewBox="0 0 9 7" fill="none"><path d="M1.9 2.4 L4.5 5 L7.1 2.4" stroke="#6fd4c4" stroke-width="1.05" stroke-linecap="round"/></svg>
<div class="a" style="left:1758px;top:485px;width:26px;height:26px;background:#2a2a2a;border-radius:6px;"></div>
<svg class="a" style="left:1765.6px;top:491.75px;" width="12.0" height="12.5" viewBox="0 0 12 12.5" fill="none"><path d="M4 1.2 Q4 0.5 4.7 0.5 H6.9 Q7.6 0.5 7.6 1.2 V2" stroke="#f2a5a9" stroke-width="1.1"/><path d="M0.7 2.4 H11" stroke="#f2a5a9" stroke-width="1.3" stroke-linecap="round"/><path d="M2.2 3.6 H9.6 L9 11.3 Q8.9 11.9 8.3 11.9 H3.5 Q2.9 11.9 2.8 11.3 Z" fill="#f2a5a9"/><path d="M4.7 5 V10.3 M7.1 5 V10.3" stroke="#2a2a2a" stroke-width="0.9"/></svg>
<div class="a" style="left:1791px;top:485px;width:31px;height:26px;background:#2a2a2a;border-radius:6px;"></div>
<svg class="a" style="left:1801px;top:491.55px;" width="11" height="12.5" viewBox="0 0 11 12.5" fill="none"><path d="M1 9 V1.7 Q1 1 1.7 1 H7.2" stroke="#bdbdbd" stroke-width="1"/><rect x="3.3" y="3.1" width="6.2" height="8.3" rx="0.9" stroke="#e8e8e8" stroke-width="1.3"/></svg>
<div class="a" style="left:219px;top:528px;width:1652px;height:1px;background:#263140;"></div>
<div class="a" style="left:238px;top:550px;width:13px;height:13px;background:#8ec8ec;border-radius:2px;"></div>
<svg class="a" style="left:238px;top:550px;" width="13" height="13" viewBox="0 0 13 13" fill="none"><path d="M3.2 6.8 L5.4 9.2 L9.8 3.6" stroke="#1a202c" stroke-width="1.5" stroke-linecap="round" stroke-linejoin="round"/></svg>
<div class="t w7" style="left:305px;top:550.24px;font-size:13px;line-height:16px;color:#ececec;font-weight:700;letter-spacing:-0.171px;">Test with missing city in address</div>
<div class="a" style="left:1067px;top:545px;width:43px;height:26px;background:#8fd4a6;border-radius:5px;"></div>
<div class="t w4" style="left:1077.8px;top:551.64px;font-size:11px;line-height:13px;color:#1a202c;font-weight:400;letter-spacing:-0.4px;">RUN</div>
<div class="t w7" style="left:1340.4px;top:551.84px;font-size:12px;line-height:14px;color:#6fd4c4;font-weight:700;letter-spacing:-0.1px;">Details</div>
<svg class="a" style="left:1389px;top:554.25px;" width="9" height="7.0" viewBox="0 0 9 7" fill="none"><path d="M1.9 2.4 L4.5 5 L7.1 2.4" stroke="#6fd4c4" stroke-width="1.05" stroke-linecap="round"/></svg>
<div class="a" style="left:1758px;top:545px;width:26px;height:26px;background:#2a2a2a;border-radius:6px;"></div>
<svg class="a" style="left:1765.6px;top:551.75px;" width="12.0" height="12.5" viewBox="0 0 12 12.5" fill="none"><path d="M4 1.2 Q4 0.5 4.7 0.5 H6.9 Q7.6 0.5 7.6 1.2 V2" stroke="#f2a5a9" stroke-width="1.1"/><path d="M0.7 2.4 H11" stroke="#f2a5a9" stroke-width="1.3" stroke-linecap="round"/><path d="M2.2 3.6 H9.6 L9 11.3 Q8.9 11.9 8.3 11.9 H3.5 Q2.9 11.9 2.8 11.3 Z" fill="#f2a5a9"/><path d="M4.7 5 V10.3 M7.1 5 V10.3" stroke="#2a2a2a" stroke-width="0.9"/></svg>
<div class="a" style="left:1791px;top:545px;width:31px;height:26px;background:#2a2a2a;border-radius:6px;"></div>
<svg class="a" style="left:1801px;top:551.55px;" width="11" height="12.5" viewBox="0 0 11 12.5" fill="none"><path d="M1 9 V1.7 Q1 1 1.7 1 H7.2" stroke="#bdbdbd" stroke-width="1"/><rect x="3.3" y="3.1" width="6.2" height="8.3" rx="0.9" stroke="#e8e8e8" stroke-width="1.3"/></svg>
<div class="a" style="left:219px;top:587px;width:1652px;height:1px;background:#263140;"></div>
<div class="a" style="left:238px;top:609px;width:13px;height:13px;background:#8ec8ec;border-radius:2px;"></div>
<svg class="a" style="left:238px;top:609px;" width="13" height="13" viewBox="0 0 13 13" fill="none"><path d="M3.2 6.8 L5.4 9.2 L9.8 3.6" stroke="#1a202c" stroke-width="1.5" stroke-linecap="round" stroke-linejoin="round"/></svg>
<div class="t w7" style="left:305px;top:609.24px;font-size:13px;line-height:16px;color:#ececec;font-weight:700;letter-spacing:-0.21px;">Test with missing street address in address</div>
<div class="a" style="left:1067px;top:604px;width:43px;height:26px;background:#8fd4a6;border-radius:5px;"></div>
<div class="t w4" style="left:1077.8px;top:610.64px;font-size:11px;line-height:13px;color:#1a202c;font-weight:400;letter-spacing:-0.4px;">RUN</div>
<div class="t w7" style="left:1340.4px;top:610.84px;font-size:12px;line-height:14px;color:#6fd4c4;font-weight:700;letter-spacing:-0.1px;">Details</div>
<svg class="a" style="left:1389px;top:613.25px;" width="9" height="7.0" viewBox="0 0 9 7" fill="none"><path d="M1.9 2.4 L4.5 5 L7.1 2.4" stroke="#6fd4c4" stroke-width="1.05" stroke-linecap="round"/></svg>
<div class="a" style="left:1758px;top:604px;width:26px;height:26px;background:#2a2a2a;border-radius:6px;"></div>
<svg class="a" style="left:1765.6px;top:610.75px;" width="12.0" height="12.5" viewBox="0 0 12 12.5" fill="none"><path d="M4 1.2 Q4 0.5 4.7 0.5 H6.9 Q7.6 0.5 7.6 1.2 V2" stroke="#f2a5a9" stroke-width="1.1"/><path d="M0.7 2.4 H11" stroke="#f2a5a9" stroke-width="1.3" stroke-linecap="round"/><path d="M2.2 3.6 H9.6 L9 11.3 Q8.9 11.9 8.3 11.9 H3.5 Q2.9 11.9 2.8 11.3 Z" fill="#f2a5a9"/><path d="M4.7 5 V10.3 M7.1 5 V10.3" stroke="#2a2a2a" stroke-width="0.9"/></svg>
<div class="a" style="left:1791px;top:604px;width:31px;height:26px;background:#2a2a2a;border-radius:6px;"></div>
<svg class="a" style="left:1801px;top:610.55px;" width="11" height="12.5" viewBox="0 0 11 12.5" fill="none"><path d="M1 9 V1.7 Q1 1 1.7 1 H7.2" stroke="#bdbdbd" stroke-width="1"/><rect x="3.3" y="3.1" width="6.2" height="8.3" rx="0.9" stroke="#e8e8e8" stroke-width="1.3"/></svg>
<div class="a" style="left:219px;top:647px;width:1652px;height:1px;background:#263140;"></div>
<div class="a" style="left:238px;top:669px;width:13px;height:13px;border:2px solid #444444;border-radius:2px;"></div>
<div class="t w7" style="left:305px;top:669.24px;font-size:13px;line-height:16px;color:#ececec;font-weight:700;letter-spacing:-0.134px;">Test with extra characters in PIN code in address</div>
<div class="a" style="left:1067px;top:664px;width:43px;height:26px;background:#8fd4a6;border-radius:5px;"></div>
<div class="t w4" style="left:1077.8px;top:670.64px;font-size:11px;line-height:13px;color:#1a202c;font-weight:400;letter-spacing:-0.4px;">RUN</div>
<div class="t w7" style="left:1340.4px;top:670.84px;font-size:12px;line-height:14px;color:#6fd4c4;font-weight:700;letter-spacing:-0.1px;">Details</div>
<svg class="a" style="left:1389px;top:673.25px;" width="9" height="7.0" viewBox="0 0 9 7" fill="none"><path d="M1.9 2.4 L4.5 5 L7.1 2.4" stroke="#6fd4c4" stroke-width="1.05" stroke-linecap="round"/></svg>
<div class="a" style="left:1758px;top:664px;width:26px;height:26px;background:#2a2a2a;border-radius:6px;"></div>
<svg class="a" style="left:1765.6px;top:670.75px;" width="12.0" height="12.5" viewBox="0 0 12 12.5" fill="none"><path d="M4 1.2 Q4 0.5 4.7 0.5 H6.9 Q7.6 0.5 7.6 1.2 V2" stroke="#f2a5a9" stroke-width="1.1"/><path d="M0.7 2.4 H11" stroke="#f2a5a9" stroke-width="1.3" stroke-linecap="round"/><path d="M2.2 3.6 H9.6 L9 11.3 Q8.9 11.9 8.3 11.9 H3.5 Q2.9 11.9 2.8 11.3 Z" fill="#f2a5a9"/><path d="M4.7 5 V10.3 M7.1 5 V10.3" stroke="#2a2a2a" stroke-width="0.9"/></svg>
<div class="a" style="left:1791px;top:664px;width:31px;height:26px;background:#2a2a2a;border-radius:6px;"></div>
<svg class="a" style="left:1801px;top:670.55px;" width="11" height="12.5" viewBox="0 0 11 12.5" fill="none"><path d="M1 9 V1.7 Q1 1 1.7 1 H7.2" stroke="#bdbdbd" stroke-width="1"/><rect x="3.3" y="3.1" width="6.2" height="8.3" rx="0.9" stroke="#e8e8e8" stroke-width="1.3"/></svg>
<div class="a" style="left:219px;top:706px;width:1652px;height:1px;background:#263140;"></div>
<div class="a" style="left:238px;top:728px;width:13px;height:13px;border:2px solid #444444;border-radius:2px;"></div>
<div class="t w7" style="left:305px;top:728.24px;font-size:13px;line-height:16px;color:#ececec;font-weight:700;letter-spacing:-0.172px;">Test with missing PIN code in address</div>
<div class="a" style="left:1067px;top:723px;width:43px;height:26px;background:#8fd4a6;border-radius:5px;"></div>
<div class="t w4" style="left:1077.8px;top:729.64px;font-size:11px;line-height:13px;color:#1a202c;font-weight:400;letter-spacing:-0.4px;">RUN</div>
<div class="t w7" style="left:1340.4px;top:729.84px;font-size:12px;line-height:14px;color:#6fd4c4;font-weight:700;letter-spacing:-0.1px;">Details</div>
<svg class="a" style="left:1389px;top:732.25px;" width="9" height="7.0" viewBox="0 0 9 7" fill="none"><path d="M1.9 2.4 L4.5 5 L7.1 2.4" stroke="#6fd4c4" stroke-width="1.05" stroke-linecap="round"/></svg>
<div class="a" style="left:1758px;top:723px;width:26px;height:26px;background:#2a2a2a;border-radius:6px;"></div>
<svg class="a" style="left:1765.6px;top:729.75px;" width="12.0" height="12.5" viewBox="0 0 12 12.5" fill="none"><path d="M4 1.2 Q4 0.5 4.7 0.5 H6.9 Q7.6 0.5 7.6 1.2 V2" stroke="#f2a5a9" stroke-width="1.1"/><path d="M0.7 2.4 H11" stroke="#f2a5a9" stroke-width="1.3" stroke-linecap="round"/><path d="M2.2 3.6 H9.6 L9 11.3 Q8.9 11.9 8.3 11.9 H3.5 Q2.9 11.9 2.8 11.3 Z" fill="#f2a5a9"/><path d="M4.7 5 V10.3 M7.1 5 V10.3" stroke="#2a2a2a" stroke-width="0.9"/></svg>
<div class="a" style="left:1791px;top:723px;width:31px;height:26px;background:#2a2a2a;border-radius:6px;"></div>
<svg class="a" style="left:1801px;top:729.55px;" width="11" height="12.5" viewBox="0 0 11 12.5" fill="none"><path d="M1 9 V1.7 Q1 1 1.7 1 H7.2" stroke="#bdbdbd" stroke-width="1"/><rect x="3.3" y="3.1" width="6.2" height="8.3" rx="0.9" stroke="#e8e8e8" stroke-width="1.3"/></svg>
<div class="a" style="left:219px;top:766px;width:1652px;height:1px;background:#263140;"></div>
<div class="a" style="left:238px;top:788px;width:13px;height:13px;border:2px solid #444444;border-radius:2px;"></div>
<div class="t w7" style="left:305px;top:788.24px;font-size:13px;line-height:16px;color:#ececec;font-weight:700;letter-spacing:0.01px;">Test with incorrect format for country code</div>
<div class="a" style="left:1067px;top:783px;width:43px;height:26px;background:#8fd4a6;border-radius:5px;"></div>
<div class="t w4" style="left:1077.8px;top:789.64px;font-size:11px;line-height:13px;color:#1a202c;font-weight:400;letter-spacing:-0.4px;">RUN</div>
<div class="t w7" style="left:1340.4px;top:789.84px;font-size:12px;line-height:14px;color:#6fd4c4;font-weight:700;letter-spacing:-0.1px;">Details</div>
<svg class="a" style="left:1389px;top:792.25px;" width="9" height="7.0" viewBox="0 0 9 7" fill="none"><path d="M1.9 2.4 L4.5 5 L7.1 2.4" stroke="#6fd4c4" stroke-width="1.05" stroke-linecap="round"/></svg>
<div class="a" style="left:1758px;top:783px;width:26px;height:26px;background:#2a2a2a;border-radius:6px;"></div>
<svg class="a" style="left:1765.6px;top:789.75px;" width="12.0" height="12.5" viewBox="0 0 12 12.5" fill="none"><path d="M4 1.2 Q4 0.5 4.7 0.5 H6.9 Q7.6 0.5 7.6 1.2 V2" stroke="#f2a5a9" stroke-width="1.1"/><path d="M0.7 2.4 H11" stroke="#f2a5a9" stroke-width="1.3" stroke-linecap="round"/><path d="M2.2 3.6 H9.6 L9 11.3 Q8.9 11.9 8.3 11.9 H3.5 Q2.9 11.9 2.8 11.3 Z" fill="#f2a5a9"/><path d="M4.7 5 V10.3 M7.1 5 V10.3" stroke="#2a2a2a" stroke-width="0.9"/></svg>
<div class="a" style="left:1791px;top:783px;width:31px;height:26px;background:#2a2a2a;border-radius:6px;"></div>
<svg class="a" style="left:1801px;top:789.55px;" width="11" height="12.5" viewBox="0 0 11 12.5" fill="none"><path d="M1 9 V1.7 Q1 1 1.7 1 H7.2" stroke="#bdbdbd" stroke-width="1"/><rect x="3.3" y="3.1" width="6.2" height="8.3" rx="0.9" stroke="#e8e8e8" stroke-width="1.3"/></svg>
<div class="a" style="left:219px;top:825px;width:1652px;height:1px;background:#263140;"></div>
<div class="a" style="left:238px;top:847px;width:13px;height:13px;border:2px solid #444444;border-radius:2px;"></div>
<div class="t w7" style="left:305px;top:847.24px;font-size:13px;line-height:16px;color:#ececec;font-weight:700;letter-spacing:-0.067px;">Test with extra characters in phone number</div>
<div class="a" style="left:1067px;top:842px;width:43px;height:26px;background:#8fd4a6;border-radius:5px;"></div>
<div class="t w4" style="left:1077.8px;top:848.64px;font-size:11px;line-height:13px;color:#1a202c;font-weight:400;letter-spacing:-0.4px;">RUN</div>
<div class="t w7" style="left:1340.4px;top:848.84px;font-size:12px;line-height:14px;color:#6fd4c4;font-weight:700;letter-spacing:-0.1px;">Details</div>
<svg class="a" style="left:1389px;top:851.25px;" width="9" height="7.0" viewBox="0 0 9 7" fill="none"><path d="M1.9 2.4 L4.5 5 L7.1 2.4" stroke="#6fd4c4" stroke-width="1.05" stroke-linecap="round"/></svg>
<div class="a" style="left:1758px;top:842px;width:26px;height:26px;background:#2a2a2a;border-radius:6px;"></div>
<svg class="a" style="left:1765.6px;top:848.75px;" width="12.0" height="12.5" viewBox="0 0 12 12.5" fill="none"><path d="M4 1.2 Q4 0.5 4.7 0.5 H6.9 Q7.6 0.5 7.6 1.2 V2" stroke="#f2a5a9" stroke-width="1.1"/><path d="M0.7 2.4 H11" stroke="#f2a5a9" stroke-width="1.3" stroke-linecap="round"/><path d="M2.2 3.6 H9.6 L9 11.3 Q8.9 11.9 8.3 11.9 H3.5 Q2.9 11.9 2.8 11.3 Z" fill="#f2a5a9"/><path d="M4.7 5 V10.3 M7.1 5 V10.3" stroke="#2a2a2a" stroke-width="0.9"/></svg>
<div class="a" style="left:1791px;top:842px;width:31px;height:26px;background:#2a2a2a;border-radius:6px;"></div>
<svg class="a" style="left:1801px;top:848.55px;" width="11" height="12.5" viewBox="0 0 11 12.5" fill="none"><path d="M1 9 V1.7 Q1 1 1.7 1 H7.2" stroke="#bdbdbd" stroke-width="1"/><rect x="3.3" y="3.1" width="6.2" height="8.3" rx="0.9" stroke="#e8e8e8" stroke-width="1.3"/></svg>
<div class="a" style="left:219px;top:885px;width:1652px;height:1px;background:#263140;"></div>
<div class="a" style="left:238px;top:907px;width:13px;height:13px;border:2px solid #444444;border-radius:2px;"></div>
<div class="t w7" style="left:305px;top:907.24px;font-size:13px;line-height:16px;color:#ececec;font-weight:700;letter-spacing:-0.09px;">Test with missing hyphen in phone number</div>
<div class="a" style="left:1067px;top:902px;width:43px;height:26px;background:#8fd4a6;border-radius:5px;"></div>
<div class="t w4" style="left:1077.8px;top:908.64px;font-size:11px;line-height:13px;color:#1a202c;font-weight:400;letter-spacing:-0.4px;">RUN</div>
<div class="t w7" style="left:1340.4px;top:908.84px;font-size:12px;line-height:14px;color:#6fd4c4;font-weight:700;letter-spacing:-0.1px;">Details</div>
<svg class="a" style="left:1389px;top:911.25px;" width="9" height="7.0" viewBox="0 0 9 7" fill="none"><path d="M1.9 2.4 L4.5 5 L7.1 2.4" stroke="#6fd4c4" stroke-width="1.05" stroke-linecap="round"/></svg>
<div class="a" style="left:1758px;top:902px;width:26px;height:26px;background:#2a2a2a;border-radius:6px;"></div>
<svg class="a" style="left:1765.6px;top:908.75px;" width="12.0" height="12.5" viewBox="0 0 12 12.5" fill="none"><path d="M4 1.2 Q4 0.5 4.7 0.5 H6.9 Q7.6 0.5 7.6 1.2 V2" stroke="#f2a5a9" stroke-width="1.1"/><path d="M0.7 2.4 H11" stroke="#f2a5a9" stroke-width="1.3" stroke-linecap="round"/><path d="M2.2 3.6 H9.6 L9 11.3 Q8.9 11.9 8.3 11.9 H3.5 Q2.9 11.9 2.8 11.3 Z" fill="#f2a5a9"/><path d="M4.7 5 V10.3 M7.1 5 V10.3" stroke="#2a2a2a" stroke-width="0.9"/></svg>
<div class="a" style="left:1791px;top:902px;width:31px;height:26px;background:#2a2a2a;border-radius:6px;"></div>
<svg class="a" style="left:1801px;top:908.55px;" width="11" height="12.5" viewBox="0 0 11 12.5" fill="none"><path d="M1 9 V1.7 Q1 1 1.7 1 H7.2" stroke="#bdbdbd" stroke-width="1"/><rect x="3.3" y="3.1" width="6.2" height="8.3" rx="0.9" stroke="#e8e8e8" stroke-width="1.3"/></svg>
<div class="a" style="left:219px;top:944px;width:1652px;height:1px;background:#263140;"></div>
<div class="a" style="left:238px;top:966px;width:13px;height:13px;border:2px solid #444444;border-radius:2px;"></div>
<div class="t w7" style="left:305px;top:966.24px;font-size:13px;line-height:16px;color:#ececec;font-weight:700;letter-spacing:-0.072px;">Test with missing country code in phone number</div>
<div class="a" style="left:1067px;top:961px;width:43px;height:26px;background:#8fd4a6;border-radius:5px;"></div>
<div class="t w4" style="left:1077.8px;top:967.64px;font-size:11px;line-height:13px;color:#1a202c;font-weight:400;letter-spacing:-0.4px;">RUN</div>
<div class="t w7" style="left:1340.4px;top:967.84px;font-size:12px;line-height:14px;color:#6fd4c4;font-weight:700;letter-spacing:-0.1px;">Details</div>
<svg class="a" style="left:1389px;top:970.25px;" width="9" height="7.0" viewBox="0 0 9 7" fill="none"><path d="M1.9 2.4 L4.5 5 L7.1 2.4" stroke="#6fd4c4" stroke-width="1.05" stroke-linecap="round"/></svg>
<div class="a" style="left:1758px;top:961px;width:26px;height:26px;background:#2a2a2a;border-radius:6px;"></div>
<svg class="a" style="left:1765.6px;top:967.75px;" width="12.0" height="12.5" viewBox="0 0 12 12.5" fill="none"><path d="M4 1.2 Q4 0.5 4.7 0.5 H6.9 Q7.6 0.5 7.6 1.2 V2" stroke="#f2a5a9" stroke-width="1.1"/><path d="M0.7 2.4 H11" stroke="#f2a5a9" stroke-width="1.3" stroke-linecap="round"/><path d="M2.2 3.6 H9.6 L9 11.3 Q8.9 11.9 8.3 11.9 H3.5 Q2.9 11.9 2.8 11.3 Z" fill="#f2a5a9"/><path d="M4.7 5 V10.3 M7.1 5 V10.3" stroke="#2a2a2a" stroke-width="0.9"/></svg>
<div class="a" style="left:1791px;top:961px;width:31px;height:26px;background:#2a2a2a;border-radius:6px;"></div>
<svg class="a" style="left:1801px;top:967.55px;" width="11" height="12.5" viewBox="0 0 11 12.5" fill="none"><path d="M1 9 V1.7 Q1 1 1.7 1 H7.2" stroke="#bdbdbd" stroke-width="1"/><rect x="3.3" y="3.1" width="6.2" height="8.3" rx="0.9" stroke="#e8e8e8" stroke-width="1.3"/></svg>
<div class="a" style="left:778px;top:52px;width:364px;height:201px;background:#303030;border-radius:7px;box-shadow:0 4px 22px rgba(0,0,0,0.6);"></div>
<div class="t w7" style="left:797.9px;top:69.70px;font-size:15px;line-height:18px;color:#f5f5f5;font-weight:700;letter-spacing:0.25px;">Manage Tags</div>
<svg class="a" style="left:1113px;top:66px;" width="12" height="11" viewBox="0 0 12 11" fill="none"><path d="M1.6 1.2 L10.4 9.8 M10.4 1.2 L1.6 9.8" stroke="#f2f2f2" stroke-width="1.35" stroke-linecap="butt"/></svg>
<div class="a" style="left:798px;top:109.2px;width:286px;height:31.39999999999999px;border:1px solid #555555;border-radius:6px;"></div>
<div class="t w4" style="left:811.9px;top:118.39px;font-size:13px;line-height:16px;color:#f0f0f0;font-weight:400;letter-spacing:-0.35px;">Address</div>
<div class="a" style="left:857px;top:117px;width:1.2000000000000455px;height:17px;background:#f0f0f0;"></div>
<div class="a" style="left:1090px;top:109px;width:33px;height:32px;background:#3c3c3c;border-radius:6px;"></div>
<svg class="a" style="left:1099px;top:118px;" width="15" height="15" viewBox="0 0 15 15" fill="none"><path d="M7.5 1.2 V13.8 M1.2 7.5 H13.8" stroke="#f2f2f2" stroke-width="1.6"/></svg>
<div class="a" style="left:798px;top:189px;width:13px;height:13px;border:2px solid #545454;border-radius:2px;"></div>
<div class="t w4" style="left:816.9px;top:166.55px;font-size:14px;line-height:17px;color:#efefef;font-weight:400;">Aadhar n</div>
<div class="t w4" style="left:816.9px;top:187.65px;font-size:14px;line-height:17px;color:#efefef;font-weight:400;">umber te</div>
<div class="t w4" style="left:816.9px;top:208.45px;font-size:14px;line-height:17px;color:#efefef;font-weight:400;">sts tag</div>
<div class="a" style="left:815px;top:913px;width:144px;height:45px;background:#1f2430;border-radius:7px;"></div>
<div class="a" style="left:821.7px;top:919px;width:131.5px;height:33px;background:#2e323c;border-radius:6px;"></div>
<div class="t w7" style="left:839.3px;top:929.04px;font-size:12px;line-height:14px;color:#e6e6e6;font-weight:700;letter-spacing:0.2px;">Manage Tags</div>
<svg class="a" style="left:923.8px;top:929px;" width="13.0" height="13" viewBox="0 0 12 12" fill="none"><path d="M5.01 1.71 L5.02 0.18 L6.98 0.18 L6.99 1.71 L8.34 2.27 L9.42 1.19 L10.81 2.58 L9.73 3.66 L10.29 5.01 L11.82 5.02 L11.82 6.98 L10.29 6.99 L9.73 8.34 L10.81 9.42 L9.42 10.81 L8.34 9.73 L6.99 10.29 L6.98 11.82 L5.02 11.82 L5.01 10.29 L3.66 9.73 L2.58 10.81 L1.19 9.42 L2.27 8.34 L1.71 6.99 L0.18 6.98 L0.18 5.02 L1.71 5.01 L2.27 3.66 L1.19 2.58 L2.58 1.19 L3.66 2.27 Z" fill="#e6e6e6" stroke="#e6e6e6" stroke-width="0.5" stroke-linejoin="round" transform="translate(6 6) scale(0.92) translate(-6 -6)"/><circle cx="6" cy="6" r="2.1" fill="#2e323c"/></svg>
<div class="a" style="left:966.4px;top:913px;width:138.89999999999998px;height:45px;background:#1f2430;border-radius:7px;"></div>
<div class="a" style="left:973.6px;top:919px;width:125.80000000000007px;height:33px;background:#2e323c;border-radius:6px;"></div>
<div class="t w7" style="left:991px;top:929.04px;font-size:12px;line-height:14px;color:#e6e6e6;font-weight:700;letter-spacing:0px;">Delete Tests</div>
<svg class="a" style="left:1068.7px;top:929px;" width="12.0" height="13.5" viewBox="0 0 12 12.5" fill="none"><path d="M4 1.2 Q4 0.5 4.7 0.5 H6.9 Q7.6 0.5 7.6 1.2 V2" stroke="#e6e6e6" stroke-width="1.1"/><path d="M0.7 2.4 H11" stroke="#e6e6e6" stroke-width="1.3" stroke-linecap="round"/><path d="M2.2 3.6 H9.6 L9 11.3 Q8.9 11.9 8.3 11.9 H3.5 Q2.9 11.9 2.8 11.3 Z" fill="#e6e6e6"/><path d="M4.7 5 V10.3 M7.1 5 V10.3" stroke="#2e323c" stroke-width="0.9"/></svg>
<div class="a" style="left:1869px;top:463px;width:61px;height:52px;background:#2c2c2c;border-radius:7px;"></div>
<svg class="a" style="left:1872px;top:470.5px;" width="46" height="46.0" viewBox="0 0 978 978" fill="none"><g stroke="#dcdcdc" stroke-width="24" stroke-linejoin="round" stroke-linecap="round"><path d="M455,215 L345,145 Q320,130 295,148 L228,205 Q212,222 212,248 L212,590 Q212,615 235,632 L300,675 Q325,690 352,668 L437,590"/>
<path d="M215,378 L590,140 Q610,128 632,140 L695,178 Q713,192 713,222 Q712,238 695,250 L530,360 Q500,384 530,410 L700,510 Q713,522 713,548 Q712,568 695,580 L630,620 Q612,630 595,620 L215,410"/>
<path d="M713,222 L713,281 Q713,292 698,300 L535,396"/>
<path d="M713,548 L713,602 Q712,615 695,625 L630,665 Q612,676 595,668 L215,458"/>
<path d="M610,627 L610,675"/></g></svg>
<div class="a" style="left:1852px;top:910px;width:48px;height:48px;background:#000;border-radius:50%;box-shadow:0 1px 6px rgba(0,0,0,0.3);"></div>
<svg class="a" style="left:1864px;top:921px;" width="24" height="26" viewBox="0 0 24 26" fill="none"><path d="M3 1 H19 Q22 1 22 4 V25 L17 22 H4 Q1.5 22 1.5 19.5 V3 Q1.5 1 3 1 Z" fill="#ffffff"/><path d="M5.5 16 Q11.5 20.5 17.5 16" stroke="#000" stroke-width="1.3" fill="none" stroke-linecap="round"/></svg>
</body></html>
